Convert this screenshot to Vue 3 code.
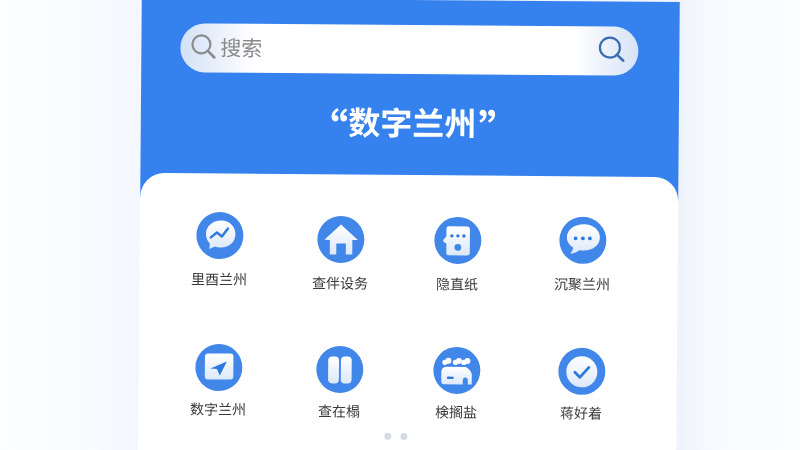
<template>
  <div class="page">
    <div class="phone">
      <div class="header">
        <div class="search">
          <svg class="search-icon" width="30" height="30" viewBox="0 0 30 30">
            <circle cx="13" cy="13" r="9" fill="none" stroke="#8b8b8b" stroke-width="2.2" />
            <path d="M19.5 19.5L26 26" stroke="#8b8b8b" stroke-width="2.6" stroke-linecap="round" />
          </svg>
          <span class="search-text">搜索</span>
          <svg class="search-icon go" width="30" height="30" viewBox="0 0 30 30">
            <circle cx="13.5" cy="13" r="10" fill="none" stroke="#3a6db5" stroke-width="2.2" />
            <path d="M20.5 20L27 26" stroke="#3a6db5" stroke-width="2.6" stroke-linecap="round" />
          </svg>
        </div>
        <h1 class="title"><span class="quote">“</span>数字兰州<span class="quote close">”</span></h1>
      </div>
      <div class="card">
        <div class="grid">
          <div v-for="item in items" :key="item.label + item.icon" class="item">
            <svg class="icon" width="48" height="48" viewBox="0 0 48 48">
              <defs>
                <linearGradient :id="'g' + item.icon" x1="0" y1="0" x2="0" y2="1">
                  <stop offset="0" stop-color="#ffffff" />
                  <stop offset="1" stop-color="#dce8fa" />
                </linearGradient>
              </defs>
              <circle cx="24" cy="24" r="23.5" fill="#4187ea" />
              <g :fill="'url(#g' + item.icon + ')'">
                <template v-if="item.icon === 1">
                  <path d="M25 9C16.500 9 10 15 10 22.500C10 26.500 11.500 29.500 14 32L13.500 37.500L19 35C21 35.800 23 36 25 36C33.500 36 39.500 30 39.500 22.500C39.500 15 33.500 9 25 9Z" />
                  <path d="M15 26L21 21L26 25L32 17" fill="none" stroke="#2f78dd" stroke-width="2.400" stroke-linejoin="round" stroke-linecap="round" />
                </template>
                <template v-else-if="item.icon === 2">
                  <path fill-rule="evenodd" d="M24 9L41 24.500L35.500 24.500L35.500 39L29 39L29 28L19.500 28L19.500 39L13 39L13 24.500L7.500 24.500Z" />
                </template>
                <template v-else-if="item.icon === 3">
                  <path d="M15 10L33 10C35 10 36 11 36 13L36 36C36 38 35 39 33 39L15 39C13 39 12.500 38 12.500 36L12.500 27C10 26.500 9 25 9.500 23.500L12.500 20L12.500 13C12.500 11 13 10 15 10Z" />
                  <circle cx="18" cy="19.500" r="1.700" fill="#2f78dd" />
                  <circle cx="24" cy="19.500" r="1.700" fill="#2f78dd" />
                  <circle cx="30" cy="19.500" r="1.700" fill="#2f78dd" />
                  <circle cx="24" cy="31" r="3.400" fill="#3f88e6" />
                </template>
                <template v-else-if="item.icon === 4">
                  <path d="M25 8C15.500 8 8 13.500 8 21C8 25.500 10.500 29 14.500 31.500C14 33.500 13 35.500 11.500 37.500C15 37 18.500 35.500 20.500 33.800C22 34 23.500 34.200 25 34.200C34 34.200 41 28.500 41 21C41 13.500 34 8 25 8Z" />
                  <circle cx="16.700" cy="22" r="1.900" fill="#2f78dd" />
                  <circle cx="24" cy="22" r="1.900" fill="#2f78dd" />
                  <circle cx="31" cy="22" r="1.900" fill="#2f78dd" />
                </template>
                <template v-else-if="item.icon === 5">
                  <rect x="10" y="10" width="28.500" height="26" rx="3" />
                  <path d="M32 18L15.500 25L22 25.500L25 32Z" fill="#2f78dd" />
                </template>
                <template v-else-if="item.icon === 6">
                  <rect x="12.300" y="11" width="10.800" height="27" rx="4" />
                  <rect x="25" y="11" width="10.800" height="27" rx="4" />
                </template>
                <template v-else-if="item.icon === 7">
                  <circle cx="12" cy="16" r="2.600" fill="#fff" />
                  <circle cx="15.500" cy="14.500" r="3" fill="#fff" />
                  <circle cx="22.500" cy="16" r="2.600" fill="#fff" />
                  <circle cx="26" cy="14.500" r="3" fill="#fff" />
                  <circle cx="31" cy="16" r="2.600" fill="#fff" />
                  <circle cx="34.500" cy="14.500" r="3" fill="#fff" />
                  <path d="M14 20.500L33 20.500C36 22 38.500 25 39 28L39 38L35 38L35 34C35 32 34 31 32.500 31C31 31 30 32 30 34L30 38L11 38C9.500 38 8.500 37 8.500 35.500L8.500 25.500C8.500 22.500 11 20.500 14 20.500Z" />
                  <rect x="14" y="30.300" width="7" height="2.400" rx="1.200" fill="#2f78dd" />
                </template>
                <template v-else>
                  <circle cx="24" cy="24.500" r="15.500" />
                  <path d="M17 25L22 30L31 20" fill="none" stroke="#2f78dd" stroke-width="2.800" stroke-linecap="round" stroke-linejoin="round" />
                </template>
              </g>
            </svg>
            <span class="label">{{ item.label }}</span>
          </div>
        </div>
        <div class="dots">
          <i></i>
          <i></i>
        </div>
      </div>
    </div>
  </div>
</template>

<script setup>
const items = [
  { icon: 1, label: "里酉兰州" },
  { icon: 2, label: "查伴设务" },
  { icon: 3, label: "隐直纸" },
  { icon: 4, label: "沉聚兰州" },
  { icon: 5, label: "数字兰州" },
  { icon: 6, label: "查在榻" },
  { icon: 7, label: "検搁盐" },
  { icon: 8, label: "蒋好着" },
];
</script>

<style>
body {
  background: #ffffff;
}
</style>

<style scoped>
.page {
  width: 800px;
  height: 450px;
  overflow: hidden;
  padding-left: 140px;
  box-sizing: border-box;
  background: linear-gradient(90deg, #fdfeff 0, #f9fbff 10%, #f4f8fe 17.2%, #eff3fb 85%, #f7faff 89%, #fcfdff 100%);
  font-family: "Noto Sans CJK SC", "Noto Sans", sans-serif;
  filter: blur(0.35px);
}
.phone {
  width: 538px;
  height: 470px;
  transform: rotate(0.45deg);
  transform-origin: 269px 225px;
  display: flex;
  flex-direction: column;
}
.header {
  height: 199px;
  padding: 25px 41px 0 39px;
  box-sizing: border-box;
  flex: none;
  background: #3581ee;
}
.search {
  height: 49px;
  border-radius: 25px;
  display: flex;
  align-items: center;
  padding: 0 12px 3px 8px;
  box-sizing: border-box;
  background: linear-gradient(90deg, #d3e1f6 0, #ffffff 16%, #ffffff 86%, #d6e3f6 100%);
}
.search-icon {
  flex: none;
}
.search-icon.go {
  margin-left: auto;
}
.search-text {
  margin-left: 2px;
  font-size: 21px;
  color: #8a8a8a;
}
.title {
  margin: 25px 0 0;
  padding-left: 9px;
  text-align: center;
  font-size: 32px;
  line-height: 44px;
  font-weight: 700;
  color: #ffffff;
}
.quote {
  font-size: 42px;
  line-height: 30px;
  vertical-align: -10px;
}
.close {
  margin-left: 2px;
}
.card {
  flex: 1;
  margin-top: -24px;
  background: #ffffff;
  border-radius: 24px 24px 0 0;
  padding: 39px 0 0 17px;
}
.grid {
  display: grid;
  grid-template-columns: 125px 117px 117px 133px;
  grid-template-rows: 131px 88px;
}
.item {
  display: flex;
  flex-direction: column;
  align-items: center;
}
.item:nth-child(1) {
  margin-top: -1px;
}
.item:nth-child(2),
.item:nth-child(3) {
  margin-top: 2px;
}
.item:nth-child(4),
.item:nth-child(6),
.item:nth-child(7),
.item:nth-child(8) {
  margin-top: 1px;
}
.icon {
  flex: none;
}
.label {
  margin-top: 9px;
  font-size: 14px;
  line-height: 20px;
  color: #3a3a3a;
}
.item:nth-child(n + 5) .label {
  margin-top: 7px;
}
.dots {
  display: flex;
  justify-content: center;
  gap: 9px;
  margin-left: -17px;
  transform: translateX(-12px);
}
.dots i {
  width: 7px;
  height: 7px;
  border-radius: 50%;
  background: #d6dbe4;
}
</style>
